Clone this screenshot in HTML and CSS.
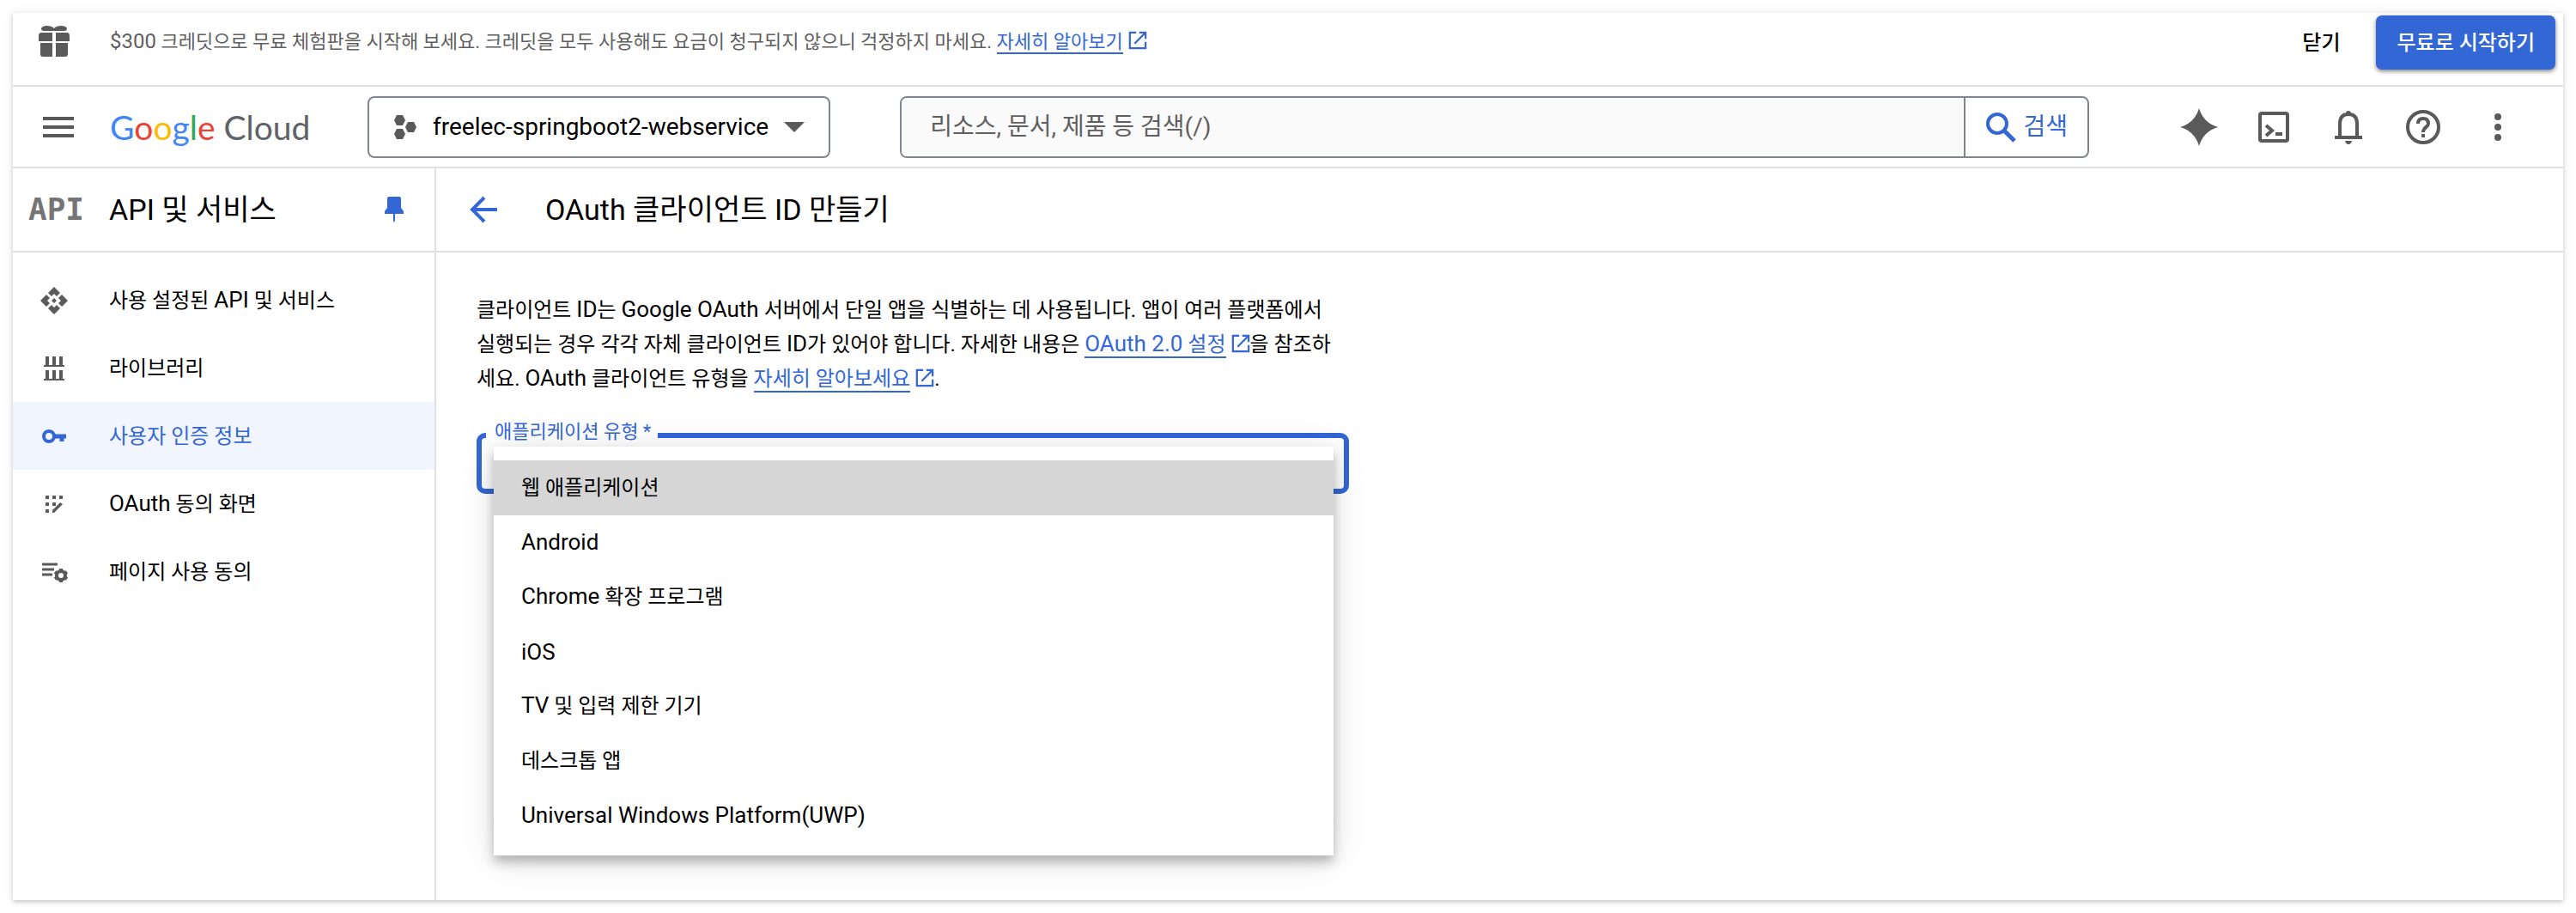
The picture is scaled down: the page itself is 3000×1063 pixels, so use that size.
FILE: index.html
```html
<!DOCTYPE html>
<html lang="ko">

<head>
    <meta charset="UTF-8">
    <meta name="viewport" content="width=device-width, initial-scale=1.0">
    <title>OAuth 클라이언트 ID 만들기</title>
    <link rel="stylesheet" href="styles.css">
</head>

<body>
    <!-- shared icon for external links -->
    <svg class="sprite" aria-hidden="true">
        <symbol id="external" viewBox="0 0 24 24">
            <path d="M10 2H2v20h20v-8M14 2h8v8M22 2L8 16" fill="none" stroke="currentColor" stroke-width="2.4" />
        </symbol>
    </svg>

    <div class="console">
        <div class="promo">
            <svg class="promo-icon" viewBox="0 0 36 36" fill="#5a5a5a" aria-hidden="true">
                <path d="M18 3c3-4 14-4 15 0 0 2-1 3-3 3H6C4 6 3 5 3 3 4-1 15-1 18 3zM3 8h13v10H0v-6q0-4 3-4zM20 8h13q3 0 3 4v6H20zM2 20h14v16H5q-3 0-3-3zM20 20h14v13q0 3-3 3H20z" />
            </svg>
            <p class="promo-text"><span class="latin">$300</span> 크레딧으로 무료 체험판을 시작해 보세요. 크레딧을 모두 사용해도 요금이 청구되지 않으니 걱정하지 마세요.
                <a class="link" href="#">자세히 알아보기</a><svg class="external" aria-hidden="true"><use href="#external" /></svg></p>
            <button class="text-button" type="button">닫기</button>
            <button class="primary-button" type="button">무료로 시작하기</button>
        </div>

        <header class="header">
            <button class="icon-button menu-button" type="button" aria-label="탐색 메뉴">
                <svg width="38" height="24" viewBox="0 0 38 24" aria-hidden="true">
                    <path d="M1 2h36M1 12h36M1 22h36" stroke="#5a5a5a" stroke-width="4" />
                </svg>
            </button>
            <a class="logo" href="#"><span class="blue">G</span><span class="red">o</span><span class="yellow">o</span><span class="blue">g</span><span class="green">l</span><span class="red">e</span> Cloud</a>
            <button class="project" type="button">
                <svg width="28" height="28" viewBox="0 0 28 28" fill="#5a5a5a" aria-hidden="true">
                    <path d="M4 0h7l3 6-3 6H4L1 6zM17 8h7l3 6-3 6h-7l-3-6zM4 16h7l3 6-3 6H4l-3-6z" />
                </svg>
                <span>freelec-springboot2-webservice</span>
                <svg width="24" height="12" viewBox="0 0 24 12" fill="#5a5a5a" aria-hidden="true">
                    <path d="M0 0h24L12 12z" />
                </svg>
            </button>
            <form class="search">
                <input class="search-input" type="search" aria-label="검색" placeholder="리소스, 문서, 제품 등 검색(/)">
                <button class="search-button" type="submit">
                    <svg width="36" height="36" viewBox="0 0 36 36" fill="none" stroke="#3367d6" stroke-width="4" aria-hidden="true">
                        <circle cx="14" cy="14" r="11" />
                        <path d="M22 22l12 12" stroke-width="5" />
                    </svg>
                    검색
                </button>
            </form>
            <div class="tools">
                <button class="icon-button" type="button" aria-label="Gemini">
                    <svg viewBox="0 0 44 44" fill="#5a5a5a" aria-hidden="true">
                        <path d="M22 0q5 17 22 22-17 5-22 22Q17 27 0 22q17-5 22-22z" />
                    </svg>
                </button>
                <button class="icon-button" type="button" aria-label="Cloud Shell">
                    <svg viewBox="0 0 44 44" fill="none" stroke="#5a5a5a" stroke-width="4" aria-hidden="true">
                        <rect x="6" y="6" width="32" height="32" rx="2" />
                        <path d="M13 20l7 6-7 6M24 30h8" />
                    </svg>
                </button>
                <button class="icon-button" type="button" aria-label="알림">
                    <svg viewBox="0 0 44 44" fill="none" stroke="#5a5a5a" stroke-width="4" aria-hidden="true">
                        <path d="M6 34h32M12 34V18q0-11 10-11t10 11v16" />
                        <path d="M19 8V6q0-3 3-3t3 3v2zM18 38h8q-1 4-4 4t-4-4z" fill="#5a5a5a" stroke="none" />
                    </svg>
                </button>
                <button class="icon-button" type="button" aria-label="도움말">
                    <svg viewBox="0 0 44 44" fill="none" stroke="#5a5a5a" stroke-width="4" aria-hidden="true">
                        <circle cx="22" cy="22" r="18" />
                        <path d="M16 18q0-6 6-6t6 6c0 4-6 4-6 10M22 30v4" />
                    </svg>
                </button>
                <button class="icon-button" type="button" aria-label="더보기">
                    <svg viewBox="0 0 44 44" fill="#5a5a5a" aria-hidden="true">
                        <circle cx="22" cy="10" r="4" />
                        <circle cx="22" cy="22" r="4" />
                        <circle cx="22" cy="34" r="4" />
                    </svg>
                </button>
            </div>
        </header>

        <div class="body">
            <aside class="sidebar">
                <div class="sidebar-head">
                    <span class="api-badge">API</span>
                    <h2>API 및 서비스</h2>
                    <button class="icon-button" type="button" aria-label="메뉴 고정">
                        <svg width="22" height="30" viewBox="0 0 22 30" fill="#3367d6" aria-hidden="true">
                            <path d="M5 0h12q2 0 2 2v11l3 4v3H12v8l-1 2-1-2v-8H0v-3l3-4V2q0-2 2-2z" />
                        </svg>
                    </button>
                </div>
                <nav class="nav">
                    <a class="nav-item" href="#">
                        <svg viewBox="0 0 32 32" fill="#5a5a5a" aria-hidden="true">
                            <path d="M16 0l7 7-4 4-3-3-3 3-4-4zM16 32l7-7-4-4-3 3-3-3-4 4zM0 16l7-7 4 4-3 3 3 3-4 4zM32 16l-7-7-4 4 3 3-3 3 4 4zM16 13l3 3-3 3-3-3z" />
                        </svg>
                        <span>사용 설정된 <span class="latin">API</span> 및 서비스</span>
                    </a>
                    <a class="nav-item" href="#">
                        <svg viewBox="0 0 32 32" fill="#5a5a5a" aria-hidden="true">
                            <path d="M6 2h4v10h4V2h4v10h4V2h4v10h2v2H4v-2h2zM6 18h4v10h4V18h4v10h4V18h4v10h2v2H4v-2h2z" />
                        </svg>
                        <span>라이브러리</span>
                    </a>
                    <a class="nav-item active" href="#">
                        <svg viewBox="0 0 32 32" fill="none" stroke="#3367d6" aria-hidden="true">
                            <circle cx="10" cy="16" r="6" stroke-width="4" />
                            <path d="M16 16h14M25 17v5" stroke-width="5" />
                        </svg>
                        <span>사용자 인증 정보</span>
                    </a>
                    <a class="nav-item" href="#">
                        <svg viewBox="0 0 32 32" fill="#5a5a5a" aria-hidden="true">
                            <path d="M6 6h4v4H6zM14 6h4v4h-4zM22 6h4v4h-4zM6 14h4v4H6zM14 14h4v4h-4zM6 22h4v4H6zM14 26v-3l9-9 3 2-10 10z" />
                        </svg>
                        <span><span class="latin">OAuth</span> 동의 화면</span>
                    </a>
                    <a class="nav-item" href="#">
                        <svg viewBox="0 0 32 32" fill="none" stroke="#5a5a5a" stroke-width="3" aria-hidden="true">
                            <path d="M2 7h18M2 13h14M2 19h12" />
                            <circle cx="24" cy="20" r="5" stroke-width="4" />
                            <path d="M24 12v3M24 25v3M17 16l3 2M28 22l3 2M17 24l3-2M28 18l3-2" stroke-width="4" />
                        </svg>
                        <span>페이지 사용 동의</span>
                    </a>
                </nav>
            </aside>

            <main class="main">
                <div class="main-head">
                    <button class="icon-button" type="button" aria-label="뒤로">
                        <svg width="32" height="32" viewBox="0 0 32 32" fill="none" stroke="#3367d6" stroke-width="4" aria-hidden="true">
                            <path d="M32 16H3M17 2L3 16l14 14" />
                        </svg>
                    </button>
                    <h1>OAuth 클라이언트 ID 만들기</h1>
                </div>
                <div class="content">
                    <p class="intro">클라이언트 <span class="latin">ID</span>는 <span class="latin">Google OAuth</span> 서버에서 단일 앱을 식별하는 데 사용됩니다. 앱이 여러 플랫폼에서<br>
                        실행되는 경우 각각 자체 클라이언트 <span class="latin">ID</span>가 있어야 합니다. 자세한 내용은 <a class="link" href="#"><span class="latin">OAuth 2.0</span> 설정</a><svg class="external" aria-hidden="true"><use href="#external" /></svg>을 참조하<br>세요.
                        <span class="latin">OAuth</span> 클라이언트 유형을 <a class="link" href="#">자세히 알아보세요</a><svg class="external" aria-hidden="true"><use href="#external" /></svg>.</p>
                    <div class="type-picker">
                        <fieldset class="field">
                            <legend><label for="app-type">애플리케이션 유형 *</label></legend>
                            <select id="app-type" required>
                                <option value=""></option>
                            </select>
                        </fieldset>
                        <ul class="options" role="listbox" aria-label="애플리케이션 유형">
                            <li class="option selected" role="option" aria-selected="true">웹 애플리케이션</li>
                            <li class="option latin" role="option">Android</li>
                            <li class="option" role="option"><span><span class="latin">Chrome</span> 확장 프로그램</span></li>
                            <li class="option latin" role="option">iOS</li>
                            <li class="option" role="option"><span><span class="latin">TV</span> 및 입력 제한 기기</span></li>
                            <li class="option" role="option">데스크톱 앱</li>
                            <li class="option latin" role="option">Universal Windows Platform(UWP)</li>
                        </ul>
                    </div>
                </div>
            </main>
        </div>
    </div>
</body>

</html>
```
FILE: styles.css
```css
* {
    box-sizing: border-box;
}

body {
    margin: 0;
    padding: 15px;
    background: #fefefe;
    color: #000;
    font-family: Roboto, "Noto Sans CJK KR", sans-serif;
    font-size: 24px;
    line-height: 40px;
}

h1,
h2,
p,
ul {
    margin: 0;
    padding: 0;
}

h1,
h2 {
    font-size: 34px;
    font-weight: 400;
}

a {
    color: inherit;
    text-decoration: none;
}

button,
input,
select {
    font: inherit;
    color: inherit;
}

button {
    padding: 0;
    border: none;
    background: none;
    cursor: pointer;
}

svg {
    flex: none;
}

.sprite {
    display: none;
}

/* latin letters run a little larger than the hangul beside them */
.latin {
    font-size: 26px;
    line-height: 1;
}

.console {
    display: flex;
    flex-direction: column;
    min-height: calc(100vh - 30px);
    background: #fff;
    box-shadow: 0 2px 5px rgba(0, 0, 0, 0.2), 0 0 12px rgba(0, 0, 0, 0.05);
}

.link {
    color: #3367d6;
    border-bottom: 2px solid #3367d6;
}

.external {
    width: 22px;
    height: 22px;
    margin-left: 6px;
    color: #3367d6;
    vertical-align: -2px;
}

/* free trial bar */
.promo {
    display: flex;
    align-items: flex-start;
    height: 86px;
    padding: 3px 9px 0 30px;
    border-bottom: 2px solid #e0e0e0;
}

.promo-icon {
    width: 36px;
    height: 36px;
    margin: 12px 47px 0 0;
}

.promo-text {
    flex: 1;
    margin-top: 11px;
    font-size: 22px;
    color: #5f5f5f;
}

.promo-text .latin {
    font-size: 24px;
}

.text-button,
.primary-button {
    height: 63px;
    font-weight: 500;
}

.text-button {
    margin-right: 42px;
}

.primary-button {
    padding: 0 24px;
    border-radius: 7px;
    background: #3367d6;
    color: #fff;
    box-shadow: 0 2px 5px rgba(0, 0, 0, 0.5);
}

/* header */
.header {
    display: flex;
    align-items: center;
    height: 95px;
    padding: 0 54px 0 34px;
    border-bottom: 2px solid #e0e0e0;
}

.icon-button {
    display: flex;
}

.logo {
    width: 300px;
    margin-left: 41px;
    font-family: Lato, sans-serif;
    font-size: 39px;
    color: #5f6368;
    white-space: nowrap;
}

.blue {
    color: #4285f4;
}

.red {
    color: #ea4335;
}

.yellow {
    color: #fbbc04;
}

.green {
    color: #34a853;
}

.project {
    display: flex;
    align-items: center;
    gap: 18px;
    height: 72px;
    padding: 0 28px;
    border: 2px solid #80868b;
    border-radius: 8px;
    font-size: 28px;
}

.search {
    display: flex;
    flex: 1;
    height: 72px;
    margin: 0 106px 0 81px;
    border: 2px solid #80868b;
    border-radius: 8px;
    overflow: hidden;
}

.search-input {
    flex: 1;
    padding: 0 33px;
    border: none;
    background: #fafafa;
    font-size: 28px;
}

.search-input::placeholder {
    color: #5f5f5f;
}

.search-button {
    display: flex;
    align-items: center;
    gap: 8px;
    padding: 0 23px;
    border-left: 2px solid #80868b;
    color: #3367d6;
    font-size: 28px;
}

.tools {
    display: flex;
    gap: 43px;
}

.tools svg {
    width: 44px;
    height: 44px;
}

/* sidebar */
.body {
    display: flex;
    flex: 1;
}

.sidebar {
    width: 493px;
    border-right: 2px solid #e0e0e0;
}

.sidebar-head,
.main-head {
    display: flex;
    align-items: center;
    height: 98px;
    border-bottom: 2px solid #e0e0e0;
}

.sidebar-head {
    padding: 0 36px 0 18px;
}

.sidebar-head h2 {
    flex: 1;
}

.api-badge {
    width: 94px;
    font-family: "DejaVu Sans Mono", monospace;
    font-size: 36px;
    font-weight: 700;
    color: #757575;
}

.nav {
    padding-top: 16px;
}

.nav-item {
    display: flex;
    align-items: center;
    gap: 48px;
    height: 79px;
    padding-left: 32px;
}

.nav-item svg {
    width: 32px;
    height: 32px;
}

.nav-item.active {
    background: #f0f5ff;
    color: #3367d6;
}

/* main column */
.main {
    flex: 1;
}

.main-head {
    gap: 56px;
    padding-left: 39px;
}

.content {
    max-width: 1063px;
    padding: 47px 0 0 47px;
}

.type-picker {
    position: relative;
    margin-top: 26px;
}

.field {
    margin: 0;
    padding: 0 5px;
    border: 6px solid #3367d6;
    border-radius: 10px;
}

.field legend {
    padding: 0 8px 8px 10px;
    font-size: 22px;
    line-height: 32px;
    color: #3367d6;
}

.field select {
    display: block;
    width: 100%;
    height: 42px;
    border: none;
    outline: none;
    background: none;
    appearance: none;
}

.options {
    position: absolute;
    top: 33px;
    left: 20px;
    right: 18px;
    display: flex;
    flex-direction: column;
    height: 476px;
    padding: 16px 0 15px;
    background: #fff;
    box-shadow: 0 8px 12px rgba(0, 0, 0, 0.25), 0 4px 40px rgba(0, 0, 0, 0.12);
    list-style: none;
}

.option {
    display: flex;
    flex: 1;
    align-items: center;
    padding: 0 32px;
}

.option.selected {
    background: #d6d6d6;
}
```
